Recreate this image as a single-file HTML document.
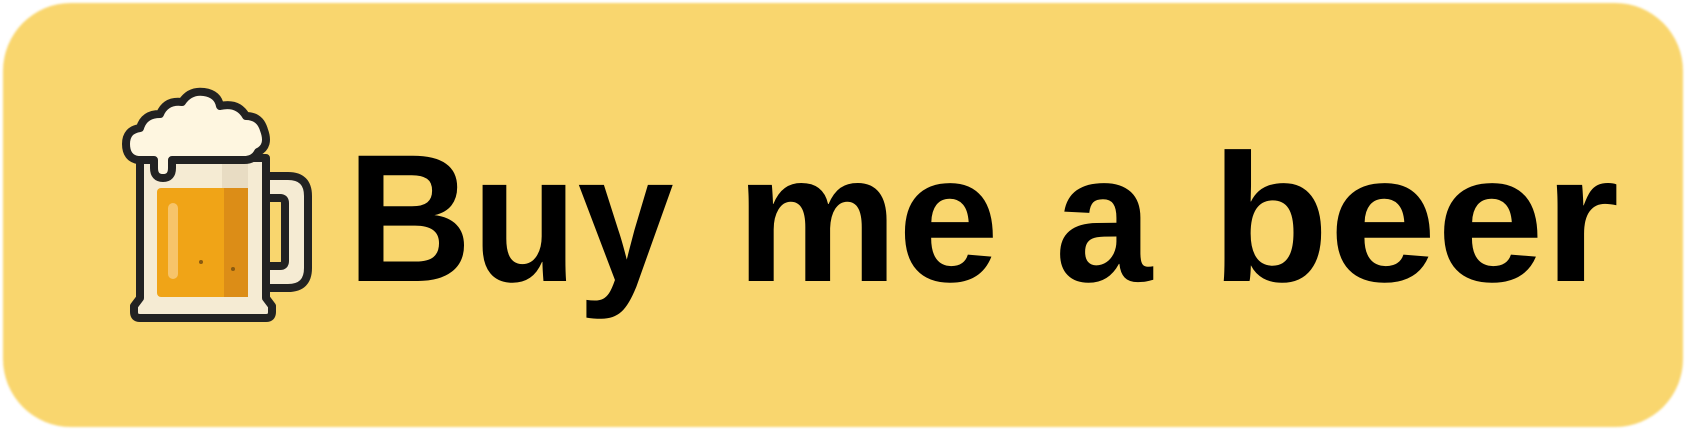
<!DOCTYPE html>
<html><head><style>
html,body{margin:0;padding:0;width:1686px;height:430px;background:#fff;overflow:hidden}
.btn{position:absolute;left:3px;top:3px;width:1680px;height:424px;border-radius:68px;background:#F9D66E;filter:blur(1px)}
.t{position:absolute;top:127px;font-family:"Liberation Sans",sans-serif;font-weight:bold;font-size:182px;line-height:1;color:#000;white-space:nowrap;transform-origin:0 0}
svg{position:absolute;left:0;top:0}
</style></head><body>
<div class="btn"></div>
<svg width="400" height="430" viewBox="0 0 400 430">
 <g stroke="#222" stroke-width="8" stroke-linejoin="round">
  <path d="M266 176 h22 q20 0 20 20 v72 q0 20 -20 20 h-22 v-22 h14 q5 0 5 -5 v-58 q0 -5 -5 -5 h-14z" fill="#F5EBD3"/>
  <path d="M140 158 h126 v140 l6 8 v6 q0 6 -6 6 h-126 q-6 0 -6 -6 v-6 l6 -8z" fill="#F5EBD3"/>
 </g>
 <rect x="157" y="188" width="91" height="109" rx="4" fill="#F0A417"/>
 <rect x="224" y="188" width="24" height="109" fill="#DC8D17"/>
 <rect x="222" y="162" width="26" height="26" fill="#E8DCC3"/>
 <rect x="168" y="203" width="10" height="76" rx="5" fill="#F7C46A"/>
 <circle cx="201" cy="262" r="2" fill="#8a5a10"/><circle cx="233" cy="269" r="2" fill="#8a5a10"/>
 <path d="M138 160 q-12 -2 -12 -16 q0 -14 14 -16 q4 -14 20 -14 q6 -14 22 -12 q8 -12 22 -10 q14 2 16 14 q18 -4 26 10 q14 0 18 14 q6 16 -6 22 q-4 8 -14 8 h-72 v8 q0 10 -9 10 q-9 0 -9 -10 v-8z" fill="#FEF6E0" stroke="#222" stroke-width="8" stroke-linejoin="round"/>
</svg>
<div class="t" style="left:347px;transform:scaleX(0.95)">Buy</div>
<div class="t" style="left:736px;transform:scaleX(1.0)">me</div>
<div class="t" style="left:1055px;transform:scaleX(0.96)">a</div>
<div class="t" style="left:1211px;transform:scaleX(1.062)">beer</div>
</body></html>
